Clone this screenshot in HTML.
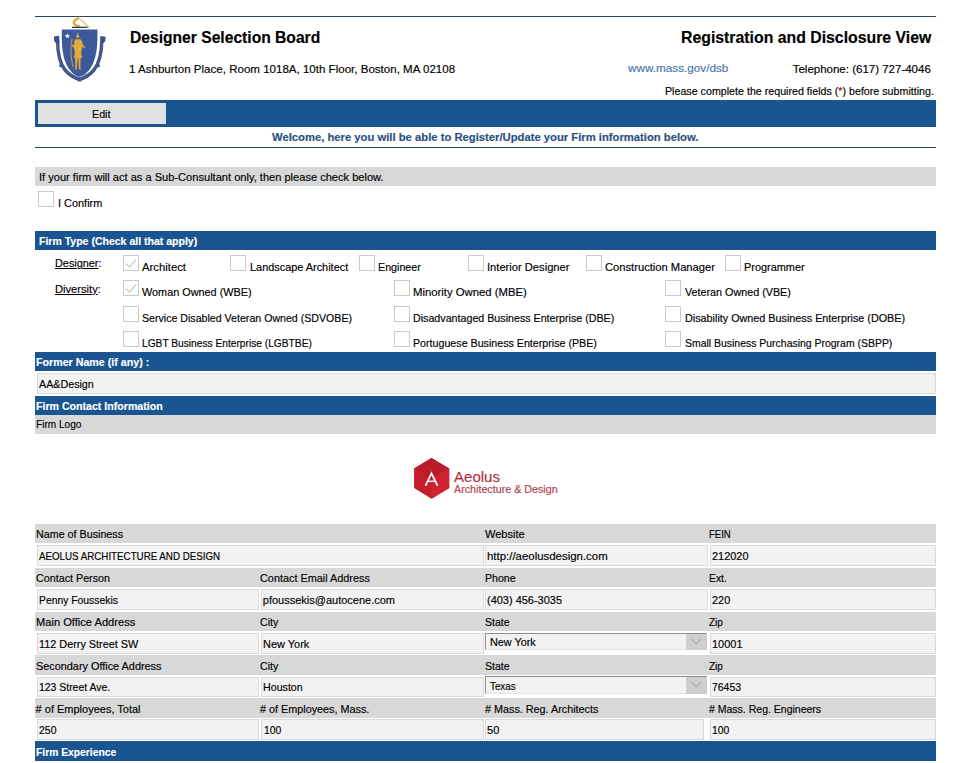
<!DOCTYPE html>
<html><head><meta charset="utf-8"><style>
html,body{margin:0;padding:0;background:#fff;width:957px;height:763px;overflow:hidden;position:relative}
.t{position:absolute;white-space:pre;font-family:"Liberation Sans",sans-serif;color:#000;transform-origin:0 0;-webkit-text-stroke:0.16px currentColor}
.r{position:absolute}
.cb{position:absolute;width:16px;height:16px;box-sizing:border-box;border:1px solid #cacaca;background:#fff}
u{text-decoration:underline;text-underline-offset:1px}
</style></head><body>
<div class="r" style="left:35px;top:16px;width:901px;height:1px;background:#2b4563;"></div><div class="r" style="left:35px;top:100px;width:901px;height:27px;background:#1a5592;"></div><div class="r" style="left:38px;top:103px;width:128px;height:21px;background:#e1e1e1;"></div><div class="r" style="left:35px;top:147px;width:901px;height:1px;background:#2b4563;"></div><div class="r" style="left:35px;top:167px;width:901px;height:19px;background:#d8d8d8;"></div><div class="r" style="left:35px;top:231px;width:901px;height:19px;background:#1a5592;"></div><div class="r" style="left:35px;top:352px;width:901px;height:19px;background:#1a5592;"></div><div class="r" style="left:37px;top:373px;width:899px;height:21px;background:#f2f2f2;box-sizing:border-box;border:1px solid #dadada"></div><div class="r" style="left:35px;top:396px;width:901px;height:19px;background:#1a5592;"></div><div class="r" style="left:35px;top:415px;width:901px;height:19px;background:#d8d8d8;"></div><div class="r" style="left:35px;top:524px;width:901px;height:19px;background:#d8d8d8;"></div><div class="r" style="left:37px;top:545px;width:447px;height:21px;background:#f2f2f2;box-sizing:border-box;border:1px solid #dadada"></div><div class="r" style="left:485px;top:545px;width:223px;height:21px;background:#f2f2f2;box-sizing:border-box;border:1px solid #dadada"></div><div class="r" style="left:710px;top:545px;width:226px;height:21px;background:#f2f2f2;box-sizing:border-box;border:1px solid #dadada"></div><div class="r" style="left:35px;top:568px;width:901px;height:19px;background:#d8d8d8;"></div><div class="r" style="left:37px;top:589px;width:222px;height:21px;background:#f2f2f2;box-sizing:border-box;border:1px solid #dadada"></div><div class="r" style="left:261px;top:589px;width:223px;height:21px;background:#f2f2f2;box-sizing:border-box;border:1px solid #dadada"></div><div class="r" style="left:485px;top:589px;width:223px;height:21px;background:#f2f2f2;box-sizing:border-box;border:1px solid #dadada"></div><div class="r" style="left:710px;top:589px;width:226px;height:21px;background:#f2f2f2;box-sizing:border-box;border:1px solid #dadada"></div><div class="r" style="left:35px;top:612px;width:901px;height:19px;background:#d8d8d8;"></div><div class="r" style="left:37px;top:633px;width:222px;height:21px;background:#f2f2f2;box-sizing:border-box;border:1px solid #dadada"></div><div class="r" style="left:261px;top:633px;width:223px;height:21px;background:#f2f2f2;box-sizing:border-box;border:1px solid #dadada"></div><div class="r" style="left:710px;top:633px;width:226px;height:21px;background:#f2f2f2;box-sizing:border-box;border:1px solid #dadada"></div><div class="r" style="left:35px;top:655px;width:901px;height:20px;background:#d8d8d8;"></div><div class="r" style="left:37px;top:677px;width:222px;height:20px;background:#f2f2f2;box-sizing:border-box;border:1px solid #dadada"></div><div class="r" style="left:261px;top:677px;width:223px;height:20px;background:#f2f2f2;box-sizing:border-box;border:1px solid #dadada"></div><div class="r" style="left:710px;top:677px;width:226px;height:20px;background:#f2f2f2;box-sizing:border-box;border:1px solid #dadada"></div><div class="r" style="left:35px;top:698px;width:901px;height:20px;background:#d8d8d8;"></div><div class="r" style="left:37px;top:719px;width:222px;height:21px;background:#f2f2f2;box-sizing:border-box;border:1px solid #dadada"></div><div class="r" style="left:261px;top:719px;width:223px;height:21px;background:#f2f2f2;box-sizing:border-box;border:1px solid #dadada"></div><div class="r" style="left:485px;top:719px;width:219px;height:21px;background:#f2f2f2;box-sizing:border-box;border:1px solid #dadada"></div><div class="r" style="left:710px;top:719px;width:226px;height:21px;background:#f2f2f2;box-sizing:border-box;border:1px solid #dadada"></div><div class="r" style="left:35px;top:741px;width:901px;height:20px;background:#1a5592;"></div><div class="r" style="left:485px;top:633px;width:222px;height:17px;background:#f2f2f2;box-sizing:border-box;border-top:1px solid #8c8c8c;border-left:1px solid #8c8c8c;border-right:1px solid #dedede;border-bottom:1px solid #e4e4e4"></div><div class="r" style="left:686px;top:634px;width:21px;height:16px;background:#cecece;"></div><svg class="r" style="left:686px;top:634px" width="21" height="16"><path d="M5.5 5.2 L10.3 9.8 L15.1 5.2" fill="none" stroke="#9c9c9c" stroke-width="1"/></svg><div class="r" style="left:485px;top:676px;width:222px;height:18px;background:#f2f2f2;box-sizing:border-box;border-top:1px solid #8c8c8c;border-left:1px solid #8c8c8c;border-right:1px solid #dedede;border-bottom:1px solid #e4e4e4"></div><div class="r" style="left:686px;top:677px;width:21px;height:17px;background:#cecece;"></div><svg class="r" style="left:686px;top:677px" width="21" height="17"><path d="M5.5 5.2 L10.3 9.8 L15.1 5.2" fill="none" stroke="#9c9c9c" stroke-width="1"/></svg>
<div class="cb" style="left:38px;top:191px"></div><div class="cb" style="left:123px;top:255px"></div><svg class="r" style="left:123px;top:255px" width="16" height="16"><path d="M2.5 8.5 L6.5 12 L13 4.5" fill="none" stroke="#cdcdcd" stroke-width="1.3"/></svg><div class="cb" style="left:230px;top:255px"></div><div class="cb" style="left:359px;top:255px"></div><div class="cb" style="left:468px;top:255px"></div><div class="cb" style="left:586px;top:255px"></div><div class="cb" style="left:725px;top:255px"></div><div class="cb" style="left:123px;top:280px"></div><svg class="r" style="left:123px;top:280px" width="16" height="16"><path d="M2.5 8.5 L6.5 12 L13 4.5" fill="none" stroke="#cdcdcd" stroke-width="1.3"/></svg><div class="cb" style="left:394px;top:280px"></div><div class="cb" style="left:665px;top:280px"></div><div class="cb" style="left:123px;top:306px"></div><div class="cb" style="left:394px;top:306px"></div><div class="cb" style="left:665px;top:306px"></div><div class="cb" style="left:123px;top:331px"></div><div class="cb" style="left:394px;top:331px"></div><div class="cb" style="left:665px;top:331px"></div>
<svg class="r" style="left:45px;top:14px" width="70" height="72" viewBox="0 0 70 72">
  <path d="M33.6 4.2 C30.6 5.6 28.4 7.4 28.8 9.2 C29.4 11 31.8 12 35.2 12.6" fill="none" stroke="#e2a838" stroke-width="2.4"/>
  <path d="M33.4 3.6 L44.6 13.8" fill="none" stroke="#e4bb62" stroke-width="1.2"/>
  <rect x="27" y="12.7" width="15.5" height="1.3" fill="#2c3656"/>
  <!-- ribbon -->
  <path d="M12.6 27 C12.6 40 14.6 49 20 56 C25 61.5 30 64.2 34.5 65.2 C39 64.2 44 61.5 49 56 C54.4 49 56.6 40 56.8 27" fill="none" stroke="#3b4f8c" stroke-width="3.4"/>
  <path d="M9 22.4 L14 21.8 L14.6 28.4 L12.8 30 L10.2 28.6 L9.2 27 Z" fill="#3b4f8c"/>
  <path d="M55.2 22 L60.6 22.8 L60.2 27.2 L58.4 29 L55.2 28.2 Z" fill="#3b4f8c"/>
  <path d="M16.2 47 L14 52.5 L18 54 Z" fill="#3b4f8c"/>
  <path d="M53 47 L55.2 52.5 L51.2 54 Z" fill="#3b4f8c"/>
  <rect x="32.4" y="63.6" width="4.2" height="3.8" fill="#3b4f8c"/>
  <path d="M12.6 30 C12.6 40 14.6 49 20 56 C25 61.5 30 64.2 34.5 65.2 C39 64.2 44 61.5 49 56 C54.4 49 56.6 40 56.8 30" fill="none" stroke="#b8a36e" stroke-width="0.7" stroke-dasharray="0.9 1.5" opacity="0.9"/>
  <!-- shield -->
  <path d="M16.8 15.6 L52.4 15.6 C52.6 30 52.2 40 47.8 50 C44 58 39 62 34.4 62.8 C30 62 25 58 21.2 50 C17 41 16.6 30 16.8 15.6 Z" fill="#3c5a9b"/>
  <path d="M22.4 19.3 L23.1 21.1 L25 21.2 L23.5 22.4 L24 24.2 L22.4 23.2 L20.8 24.2 L21.3 22.4 L19.8 21.2 L21.7 21.1 Z" fill="#fff"/>
  <!-- figure -->
  <g fill="#e6a93a">
    <ellipse cx="32.8" cy="22.4" rx="1.4" ry="1.8"/>
    <path d="M31.9 20.6 L32.4 18.4 L33.6 20.2 Z"/>
    <path d="M30.4 25.2 L35.4 25.2 L37.2 27.6 L37.6 33 L36.4 36.5 L36.2 40 L37.4 43.5 L35.6 44 L35.4 54.2 L36.6 55.4 L33.8 55.6 L33.4 44.2 L32.6 44.2 L31.8 55.6 L29.2 55.4 L30.4 54.2 L30.2 44 L28.6 43.5 L29.8 40 L29.6 36.5 L28.8 33.5 L27.4 32.4 L26.4 31.2 L27.4 30.4 L29 31.6 L29.2 27.6 Z"/>
    <path d="M37 29.6 L40.2 33.4 L39.4 34.2 L36.8 31.6 Z"/>
  </g>
  <path d="M27.2 24.5 C25.3 32 25.5 44 28.4 53.5" fill="none" stroke="#cfa64a" stroke-width="0.9"/>
</svg>

<svg class="r" style="left:410px;top:454px" width="44" height="48" viewBox="0 0 44 48">
  <path d="M21.5 4 L39.2 14.4 L39.2 34.1 L21.5 44.7 L4.1 34.1 L4.1 14.4 Z" fill="#c41e2c"/>
  <path d="M21.5 4 L39.2 14.4 L21.5 24.6 L4.1 14.4 Z" fill="#bb1c29"/>
  <path d="M21.5 24.6 L39.2 14.4 L39.2 34.1 L21.5 44.7 Z" fill="#cf2331"/>
  <path d="M15.4 31.8 L21.5 19.3 L27.6 31.8" fill="none" stroke="#fff" stroke-width="1.7" stroke-linejoin="miter"/>
  <path d="M17.6 27.3 L25.4 27.3" stroke="#fff" stroke-width="1.4"/>
</svg>

<div class="t" style="left:129.7px;top:29.9px;font-size:16px;line-height:16px;transform:scaleX(0.977);font-weight:bold">Designer Selection Board</div>
<div class="t" style="left:129.0px;top:63.8px;font-size:11.5px;line-height:11.5px;transform:scaleX(1.004)">1 Ashburton Place, Room 1018A, 10th Floor, Boston, MA 02108</div>
<div class="t" style="left:680.7px;top:29.7px;font-size:16px;line-height:16px;transform:scaleX(0.989);font-weight:bold">Registration and Disclosure View</div>
<div class="t" style="left:627.6px;top:62.8px;font-size:11.5px;line-height:11.5px;transform:scaleX(1.020);color:#4a76a8">www.mass.gov/dsb</div>
<div class="t" style="left:792.7px;top:63.6px;font-size:11.5px;line-height:11.5px">Telephone: (617) 727-4046</div>
<div class="t" style="left:664.9px;top:85.8px;font-size:10.5px;line-height:10.5px;transform:scaleX(1.017)">Please complete the required fields (<span style="color:#c00">*</span>) before submitting.</div>
<div class="t" style="left:92.3px;top:108.8px;font-size:11px;line-height:11px;transform:scaleX(0.975)">Edit</div>
<div class="t" style="left:272.0px;top:131.8px;font-size:11px;line-height:11px;transform:scaleX(1.023);font-weight:bold;color:#2b5083">Welcome, here you will be able to Register/Update your Firm information below.</div>
<div class="t" style="left:38.8px;top:171.6px;font-size:11px;line-height:11px;transform:scaleX(1.007)">If your firm will act as a Sub-Consultant only, then please check below.</div>
<div class="t" style="left:57.6px;top:197.8px;font-size:11px;line-height:11px;transform:scaleX(0.993)">I Confirm</div>
<div class="t" style="left:39.0px;top:235.8px;font-size:11px;line-height:11px;transform:scaleX(0.956);font-weight:bold;color:#fff">Firm Type (Check all that apply)</div>
<div class="t" style="left:55.1px;top:258.2px;font-size:11px;line-height:11px;transform:scaleX(0.987)"><u>Designer</u>:</div>
<div class="t" style="left:55.3px;top:283.8px;font-size:11px;line-height:11px;transform:scaleX(1.013)"><u>Diversity</u>:</div>
<div class="t" style="left:142.0px;top:261.6px;font-size:11px;line-height:11px;transform:scaleX(1.028)">Architect</div>
<div class="t" style="left:249.8px;top:261.6px;font-size:11px;line-height:11px;transform:scaleX(0.991)">Landscape Architect</div>
<div class="t" style="left:378.4px;top:261.6px;font-size:11px;line-height:11px;transform:scaleX(0.972)">Engineer</div>
<div class="t" style="left:487.0px;top:261.6px;font-size:11px;line-height:11px;transform:scaleX(1.014)">Interior Designer</div>
<div class="t" style="left:605.0px;top:261.6px;font-size:11px;line-height:11px;transform:scaleX(1.016)">Construction Manager</div>
<div class="t" style="left:744.4px;top:261.6px;font-size:11px;line-height:11px;transform:scaleX(0.991)">Programmer</div>
<div class="t" style="left:142.0px;top:287.0px;font-size:11px;line-height:11px;transform:scaleX(0.987)">Woman Owned (WBE)</div>
<div class="t" style="left:412.8px;top:287.0px;font-size:11px;line-height:11px;transform:scaleX(1.028)">Minority Owned (MBE)</div>
<div class="t" style="left:684.5px;top:287.0px;font-size:11px;line-height:11px;transform:scaleX(0.978)">Veteran Owned (VBE)</div>
<div class="t" style="left:142.0px;top:312.8px;font-size:11px;line-height:11px;transform:scaleX(0.965)">Service Disabled Veteran Owned (SDVOBE)</div>
<div class="t" style="left:412.8px;top:312.8px;font-size:11px;line-height:11px;transform:scaleX(0.971)">Disadvantaged Business Enterprise (DBE)</div>
<div class="t" style="left:684.5px;top:312.8px;font-size:11px;line-height:11px;transform:scaleX(0.981)">Disability Owned Business Enterprise (DOBE)</div>
<div class="t" style="left:142.0px;top:338.0px;font-size:11px;line-height:11px;transform:scaleX(0.927)">LGBT Business Enterprise (LGBTBE)</div>
<div class="t" style="left:412.8px;top:338.0px;font-size:11px;line-height:11px;transform:scaleX(0.970)">Portuguese Business Enterprise (PBE)</div>
<div class="t" style="left:684.5px;top:338.0px;font-size:11px;line-height:11px;transform:scaleX(0.950)">Small Business Purchasing Program (SBPP)</div>
<div class="t" style="left:36.4px;top:356.8px;font-size:11px;line-height:11px;transform:scaleX(0.970);font-weight:bold;color:#fff">Former Name (if any) :</div>
<div class="t" style="left:38.7px;top:378.8px;font-size:11px;line-height:11px;transform:scaleX(0.974)">AA&amp;Design</div>
<div class="t" style="left:36.4px;top:400.5px;font-size:11px;line-height:11px;transform:scaleX(0.964);font-weight:bold;color:#fff">Firm Contact Information</div>
<div class="t" style="left:36.4px;top:418.8px;font-size:11px;line-height:11px;transform:scaleX(0.917)">Firm Logo</div>
<div class="t" style="left:453.5px;top:469.8px;font-size:14.5px;line-height:14.5px;transform:scaleX(1.037);color:#b3313d">Aeolus</div>
<div class="t" style="left:453.5px;top:484.6px;font-size:10px;line-height:10px;transform:scaleX(1.072);color:#b04452">Architecture &amp; Design</div>
<div class="t" style="left:35.7px;top:528.8px;font-size:11px;line-height:11px;transform:scaleX(0.975)">Name of Business</div>
<div class="t" style="left:484.7px;top:528.8px;font-size:11px;line-height:11px;transform:scaleX(1.004)">Website</div>
<div class="t" style="left:709.1px;top:528.8px;font-size:11px;line-height:11px;transform:scaleX(0.866)">FEIN</div>
<div class="t" style="left:39.1px;top:550.7px;font-size:11px;line-height:11px;transform:scaleX(0.887)">AEOLUS ARCHITECTURE AND DESIGN</div>
<div class="t" style="left:487.3px;top:550.7px;font-size:11px;line-height:11px;transform:scaleX(1.039)">http://aeolusdesign.com</div>
<div class="t" style="left:711.8px;top:550.7px;font-size:11px;line-height:11px;transform:scaleX(0.994)">212020</div>
<div class="t" style="left:35.7px;top:572.8px;font-size:11px;line-height:11px;transform:scaleX(0.976)">Contact Person</div>
<div class="t" style="left:260.2px;top:572.8px;font-size:11px;line-height:11px;transform:scaleX(0.987)">Contact Email Address</div>
<div class="t" style="left:484.7px;top:572.8px;font-size:11px;line-height:11px;transform:scaleX(0.962)">Phone</div>
<div class="t" style="left:709.1px;top:572.8px;font-size:11px;line-height:11px;transform:scaleX(0.939)">Ext.</div>
<div class="t" style="left:39.1px;top:594.9px;font-size:11px;line-height:11px;transform:scaleX(0.942)">Penny Foussekis</div>
<div class="t" style="left:262.8px;top:594.9px;font-size:11px;line-height:11px">pfoussekis@autocene.com</div>
<div class="t" style="left:487.3px;top:594.9px;font-size:11px;line-height:11px;transform:scaleX(0.997)">(403) 456-3035</div>
<div class="t" style="left:711.8px;top:594.9px;font-size:11px;line-height:11px;transform:scaleX(0.991)">220</div>
<div class="t" style="left:35.7px;top:616.9px;font-size:11px;line-height:11px;transform:scaleX(1.011)">Main Office Address</div>
<div class="t" style="left:260.2px;top:616.9px;font-size:11px;line-height:11px;transform:scaleX(0.966)">City</div>
<div class="t" style="left:484.7px;top:616.9px;font-size:11px;line-height:11px;transform:scaleX(0.958)">State</div>
<div class="t" style="left:709.1px;top:616.9px;font-size:11px;line-height:11px;transform:scaleX(0.910)">Zip</div>
<div class="t" style="left:39.1px;top:639.0px;font-size:11px;line-height:11px;transform:scaleX(0.986)">112 Derry Street SW</div>
<div class="t" style="left:262.8px;top:639.0px;font-size:11px;line-height:11px;transform:scaleX(0.996)">New York</div>
<div class="t" style="left:711.8px;top:639.0px;font-size:11px;line-height:11px;transform:scaleX(0.997)">10001</div>
<div class="t" style="left:35.6px;top:660.7px;font-size:11px;line-height:11px;transform:scaleX(0.988)">Secondary Office Address</div>
<div class="t" style="left:260.2px;top:660.7px;font-size:11px;line-height:11px;transform:scaleX(0.966)">City</div>
<div class="t" style="left:484.7px;top:660.7px;font-size:11px;line-height:11px;transform:scaleX(0.958)">State</div>
<div class="t" style="left:709.1px;top:660.7px;font-size:11px;line-height:11px;transform:scaleX(0.910)">Zip</div>
<div class="t" style="left:38.8px;top:681.9px;font-size:11px;line-height:11px;transform:scaleX(0.948)">123 Street Ave.</div>
<div class="t" style="left:262.8px;top:681.9px;font-size:11px;line-height:11px;transform:scaleX(0.969)">Houston</div>
<div class="t" style="left:712.0px;top:681.9px;font-size:11px;line-height:11px;transform:scaleX(0.948)">76453</div>
<div class="t" style="left:35.6px;top:703.5px;font-size:11px;line-height:11px"># of Employees, Total</div>
<div class="t" style="left:260.2px;top:703.5px;font-size:11px;line-height:11px;transform:scaleX(0.983)"># of Employees, Mass.</div>
<div class="t" style="left:484.6px;top:703.5px;font-size:11px;line-height:11px;transform:scaleX(0.981)"># Mass. Reg. Architects</div>
<div class="t" style="left:708.9px;top:703.5px;font-size:11px;line-height:11px;transform:scaleX(0.955)"># Mass. Reg. Engineers</div>
<div class="t" style="left:38.8px;top:725.2px;font-size:11px;line-height:11px;transform:scaleX(0.953)">250</div>
<div class="t" style="left:263.5px;top:725.2px;font-size:11px;line-height:11px;transform:scaleX(0.942)">100</div>
<div class="t" style="left:487.0px;top:725.2px;font-size:11px;line-height:11px;transform:scaleX(1.004)">50</div>
<div class="t" style="left:712.0px;top:725.2px;font-size:11px;line-height:11px;transform:scaleX(0.948)">100</div>
<div class="t" style="left:490.4px;top:636.6px;font-size:11px;line-height:11px;transform:scaleX(0.985)">New York</div>
<div class="t" style="left:490.4px;top:680.9px;font-size:11px;line-height:11px;transform:scaleX(0.890)">Texas</div>
<div class="t" style="left:36.1px;top:746.5px;font-size:11px;line-height:11px;transform:scaleX(0.937);font-weight:bold;color:#fff">Firm Experience</div>
</body></html>
